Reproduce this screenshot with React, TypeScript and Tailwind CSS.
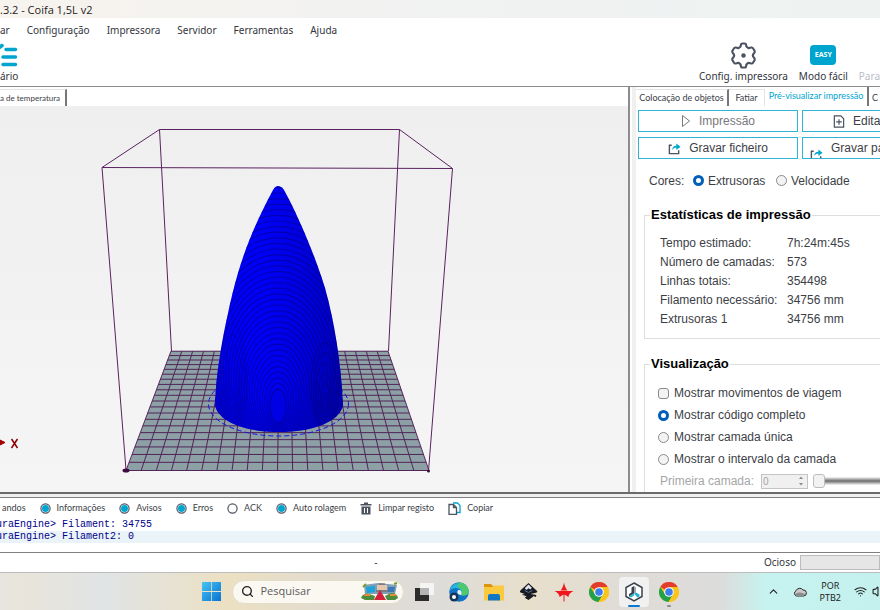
import React from 'react';
import { ChevronUp, Search, Wifi, Volume1 } from 'lucide-react';

const menus = ['ar', 'Configuração', 'Impressora', 'Servidor', 'Ferramentas', 'Ajuda'];

const stats = [
  { label: 'Tempo estimado:', value: '7h:24m:45s' },
  { label: 'Número de camadas:', value: '573' },
  { label: 'Linhas totais:', value: '354498' },
  { label: 'Filamento necessário:', value: '34756 mm' },
  { label: 'Extrusoras 1', value: '34756 mm' },
];

const logFilters = [
  { label: 'andos', on: true, hidden: true },
  { label: 'Informações', on: true },
  { label: 'Avisos', on: true },
  { label: 'Erros', on: true },
  { label: 'ACK', on: false },
  { label: 'Auto rolagem', on: true },
];

const radioClass =
  'm-0 size-[11px] shrink-0 appearance-none rounded-full border border-[#8a8a8a] bg-[#f3f3f3] checked:border-[3px] checked:border-[#005fb8] checked:bg-white';

const taskButton = 'relative flex h-[30px] w-[30px] items-center justify-center rounded-[4px]';

// Floor grid: 20 x 20 cells in one point perspective
const CELLS = 20;
const K = 0.396;
const floorPoint = (u: number, t: number) => {
  const s = 1 / (1 + K * t);
  const front = 126 + u * 303;
  return [281 + (front - 281) * s + 1 * t, 50 + 420.5 * s];
};

function Viewport() {
  const steps = Array.from({ length: CELLS + 1 }, (_, i) => i / CELLS);
  const line = (a: number[], b: number[], key: string) => (
    <line key={key} x1={a[0]} y1={a[1]} x2={b[0]} y2={b[1]} />
  );
  const rings = Array.from({ length: 40 }, (_, i) => i);

  return (
    <svg viewBox="0 106 628 385" className="block h-full w-full" preserveAspectRatio="xMinYMin meet" role="img" aria-label="Coifa 1,5L v2">
      <defs>
        <linearGradient id="hull" x1="0" x2="1" y1="0" y2="0">
          <stop offset="0" stopColor="#0000f4" />
          <stop offset="0.35" stopColor="#0000f8" />
          <stop offset="0.65" stopColor="#0000e0" />
          <stop offset="0.85" stopColor="#0000c8" />
          <stop offset="1" stopColor="#0000b4" />
        </linearGradient>
        <clipPath id="hullClip">
          <path d="M278 186 C280 186 282 187 284 190 C298 215 316 258 325 288 C334 320 341 360 343 405 C340 422 312 432 279 432 C246 432 218 422 215 405 C216 375 222 340 227 318 C236 275 246 240 273 190 C275 187 276 186 278 186 Z" />
        </clipPath>
      </defs>

      <polygon points="171,351 388,351 429,471 126,471" fill="#8ca0a5" />
      <g stroke="#4b1850" strokeWidth="1" opacity="0.9">
        {steps.map((u) => line(floorPoint(u, 0), floorPoint(u, 1), `c${u}`))}
        {steps.map((t) => line(floorPoint(0, t), floorPoint(1, t), `r${t}`))}
      </g>
      <g stroke="#5a2260" strokeWidth="1" fill="none">
        <path d="M102 167.500 L159.500 129.500 H399.500 L452.500 168.500 Z" />
        <path d="M159.500 129.500 L171.500 351 M399.500 129.500 L388.500 351 M102 167.500 L126 470 M452.500 168.500 L428.500 471" />
      </g>
      <ellipse cx="126" cy="470.500" rx="3.500" ry="2" fill="#3d0a42" />
      <circle cx="428.500" cy="471" r="1.500" fill="#3d0a42" />

      <ellipse cx="278.500" cy="404" rx="70" ry="32" fill="none" stroke="#1414e6" strokeDasharray="5 3" />
      <g clipPath="url(#hullClip)">
        <rect x="210" y="180" width="140" height="260" fill="url(#hull)" />
        <g fill="none" stroke="#0000b0" strokeWidth="1" opacity="0.5">
          {rings.slice(0, 7).map((i) => (
            <ellipse key={i} cx="232" cy={400 - i * 3} rx={3 + i * 2} ry={10 + i * 8} />
          ))}
        </g>
        <g fill="none" stroke="#000090" strokeWidth="1.2" opacity="0.6">
          {rings.map((i) => (
            <ellipse key={i} cx="278" cy={406 - i * 2} rx={8 + i * 2.6} ry={17 + i * 3.6} />
          ))}
        </g>
        <g fill="none" stroke="#000078" strokeWidth="1" opacity="0.6">
          {rings.slice(0, 6).map((i) => (
            <ellipse key={i} cx="325" cy={401 - i * 3} rx={2 + i * 2.4} ry={8 + i * 7} />
          ))}
        </g>
        <ellipse cx="278" cy="406" rx="8" ry="17" fill="#0000e4" stroke="#00009c" />
      </g>

      <path d="M0 442.500 H2 M0 440 L5 442.500 L0 445 Z" fill="#a00000" stroke="#a00000" />
      <path d="M11.500 439 L17.500 448 M17.500 439 L11.500 448" stroke="#8b0000" strokeWidth="1.500" />
    </svg>
  );
}

function ShareIcon() {
  return (
    <svg viewBox="0 0 14 14" className="size-[13px] shrink-0" fill="none" aria-hidden="true">
      <path d="M4 3.500 H1.500 V12.500 H11.500 V9" stroke="#4c5260" strokeWidth="1.500" />
      <path d="M4.500 9 C4.500 5.500 6.500 4 9 4 V1.500 L13.500 5 L9 8.500 V6 C7 6 5.500 7 4.500 9 Z" fill="#00a5cf" />
    </svg>
  );
}

function ChromeIcon() {
  return (
    <svg viewBox="0 0 20 20" className="size-5" aria-hidden="true">
      <circle cx="10" cy="10" r="10" fill="#f9c51c" />
      <path d="M10 10 L1.300 5 A10 10 0 0 1 18.700 5 Z" fill="#e33b2e" />
      <path d="M1.300 5 A10 10 0 0 0 9.500 20 L14 12.300 L10 10 L6 12.300 Z" fill="#23a04a" />
      <path d="M10 5 H18.700 A10 10 0 0 1 9.500 20 L14.300 12.500 Z" fill="#f9c51c" />
      <circle cx="10" cy="10" r="4.800" fill="#fff" />
      <circle cx="10" cy="10" r="3.800" fill="#3b7ded" />
    </svg>
  );
}

function Header() {
  return (
    <header className="shrink-0 border-b border-[#8c8c8c] bg-white">
      <div className="h-[18px] bg-linear-to-r from-[#f7f3ee] via-[#f1f2f2] to-[#eef3f2] font-['Open_Sans',sans-serif] text-[11px] leading-[19px] text-[#1c1c1c]">
        .3.2 - Coifa 1,5L v2
      </div>
      <nav className="flex h-6 items-center gap-[17px] text-[10px] text-[#33353d]">
        {menus.map((m) => (
          <button key={m} type="button">{m}</button>
        ))}
      </nav>
      <div className="flex h-11 items-start justify-between text-[10px] leading-[14px] text-[#33353d]">
        <button type="button" className="flex flex-col items-start">
          <svg viewBox="0 0 18 26" className="h-[27px] w-[18px]" fill="none" stroke="#00a5cf" strokeWidth="3.500" strokeLinecap="round" aria-hidden="true">
            <path d="M-2 6 L2 3" />
            <path d="M6 7 H15.500 M3 14.500 H15.500 M3 22 H15.500" />
          </svg>
          ário
        </button>
        <div className="flex gap-[11px]">
          <button type="button" className="flex flex-col items-center">
            <svg viewBox="0 0 26 26" className="size-[27px]" fill="none" stroke="#4c5260" strokeWidth="2" strokeLinejoin="round" aria-hidden="true">
              <path d="M10.500 3 Q10.500 1.500 12 1.500 H14 Q15.500 1.500 15.500 3 Q15.500 5 18 6 Q19.500 5.600 20.500 5.300 Q21.600 5 22.300 6.300 L23.800 8.800 Q24.200 10 23 10.900 Q21 13 23 15.100 Q24.200 16 23.800 17.200 L22.300 19.700 Q21.600 21 20.500 20.700 Q19.500 20.400 18 20 Q15.500 21 15.500 23 Q15.500 24.500 14 24.500 H12 Q10.500 24.500 10.500 23 Q10.500 21 8 20 Q6.500 20.400 5.500 20.700 Q4.400 21 3.700 19.700 L2.200 17.200 Q1.800 16 3 15.100 Q5 13 3 10.900 Q1.800 10 2.200 8.800 L3.700 6.300 Q4.400 5 5.500 5.300 Q6.500 5.600 8 6 Q10.500 5 10.500 3 Z" />
              <circle cx="13" cy="13" r="1.200" fill="#4c5260" />
            </svg>
            Config. impressora
          </button>
          <button type="button" className="flex flex-col items-center">
            <span className="mt-[3px] mb-1 flex h-5 w-[26px] items-center justify-center rounded-[4px] bg-[#00a5cf] text-[7px] font-bold text-white">EASY</span>
            Modo fácil
          </button>
          <button type="button" className="pt-[27px] text-[#b9bcc4]" disabled>Para</button>
        </div>
      </div>
    </header>
  );
}

function SidePanel() {
  return (
    <aside className="flex w-[248px] shrink-0 flex-col overflow-hidden border-l-4 border-[#f0f0f0] bg-white font-['Liberation_Sans',Arial,sans-serif] text-[12px] text-[#3c3e46]">
      <div className="flex h-[19px] shrink-0 items-end font-['Lato',sans-serif] text-[9px] whitespace-nowrap" role="tablist">
        <button type="button" role="tab" className="h-[17px] w-[93px] shrink-0 border-t border-r-2 border-t-[#e4e4e4] border-r-[#777]">Colocação de objetos</button>
        <button type="button" role="tab" className="h-[17px] w-9 shrink-0 border-t border-r border-[#e4e4e4]">Fatiar</button>
        <button type="button" role="tab" aria-selected="true" className="h-[19px] w-[104px] shrink-0 border-r-2 border-[#777] pb-[2px] text-[#00a5cf]">Pré-visualizar impressão</button>
        <button type="button" role="tab" className="h-[17px] shrink-0 pl-[3px]">C</button>
      </div>

      <div className="mt-1 ml-[2px] grid w-[324px] shrink-0 grid-cols-2 gap-x-1 gap-y-[5px]">
        <button type="button" className="flex h-[22px] items-center justify-center gap-2 border border-[#2fb4d8] text-[#77787d]">
          <svg viewBox="0 0 10 14" className="h-[14px] w-[10px]" fill="none" stroke="#77787d" aria-hidden="true">
            <path d="M1.500 1.500 L8.500 7 L1.500 12.500 Z" />
          </svg>
          Impressão
        </button>
        <button type="button" className="flex h-[22px] items-center gap-2 border border-[#2fb4d8] pl-[30px]">
          <svg viewBox="0 0 12 14" className="h-[13px] w-3" fill="none" stroke="#4c5260" strokeWidth="1.300" aria-hidden="true">
            <path d="M1 1 H8 L11 4 V13 H1 Z M6 4.500 V10.500 M3 7.500 H9" />
          </svg>
          Edita
        </button>
        <button type="button" className="flex h-[22px] items-center justify-center gap-2 border border-[#2fb4d8]">
          <ShareIcon />
          Gravar ficheiro
        </button>
        <button type="button" className="flex h-[22px] items-start gap-2 overflow-hidden border border-[#2fb4d8] pl-[7px] whitespace-nowrap">
          <span className="pt-[10px]"><ShareIcon /></span>
          <span className="leading-5">Gravar pa</span>
        </button>
      </div>

      <div className="flex h-[43px] shrink-0 items-center pl-[13px]">
        <span className="w-11">Cores:</span>
        <label className="flex w-[83px] items-center gap-1">
          <input type="radio" name="cores" defaultChecked className={radioClass} />
          Extrusoras
        </label>
        <label className="flex items-center gap-1">
          <input type="radio" name="cores" className={radioClass} />
          Velocidade
        </label>
      </div>

      <fieldset className="mt-[3px] ml-2 h-[134px] w-[300px] shrink-0 border border-[#dedede] pl-[15px]">
        <legend className="-ml-[10px] px-[1px] text-[13px] leading-5 font-bold text-black">Estatísticas de impressão</legend>
        <dl className="grid grid-cols-[127px_1fr] pt-[9px] leading-[19px]">
          {stats.map((s) => (
            <React.Fragment key={s.label}>
              <dt>{s.label}</dt>
              <dd>{s.value}</dd>
            </React.Fragment>
          ))}
        </dl>
      </fieldset>

      <fieldset className="mt-[15px] ml-2 w-[300px] shrink-0 border border-[#dedede] pl-[13px]">
        <legend className="-ml-2 px-[1px] text-[13px] leading-5 font-bold text-black">Visualização</legend>
        <div className="flex flex-col pt-2">
          <label className="flex h-[22px] items-center gap-[5px]">
            <input type="checkbox" className="m-0 size-[11px] appearance-none rounded-[3px] border border-[#8a8a8a] bg-[#f3f3f3]" />
            Mostrar movimentos de viagem
          </label>
          {['Mostrar código completo', 'Mostrar camada única', 'Mostrar o intervalo da camada'].map((l, i) => (
            <label key={l} className="flex h-[22px] items-center gap-[5px]">
              <input type="radio" name="vista" defaultChecked={i === 0} className={radioClass} />
              {l}
            </label>
          ))}
          <div className="flex h-[22px] items-center pl-[2px] text-[#a6a6a6]">
            <label htmlFor="layer" className="w-[101px]">Primeira camada:</label>
            <span className="flex h-[15px] w-[47px] items-center border border-[#c4c4c4] bg-[#f0f0f0]">
              <input id="layer" type="text" defaultValue="0" disabled className="w-9 pl-[1px] text-[10px]" />
              <svg viewBox="0 0 6 12" className="h-3 w-[6px]" fill="#8a8a8a" aria-hidden="true">
                <path d="M1 4 L3 1.500 L5 4 Z M1 8 L3 10.500 L5 8 Z" />
              </svg>
            </span>
            <input
              type="range"
              aria-label="Primeira camada"
              defaultValue={0}
              disabled
              className="ml-[5px] h-[14px] w-[130px] appearance-none bg-linear-to-b from-transparent from-20% via-[#6c6c6c] via-50% to-transparent to-80% [&::-webkit-slider-thumb]:h-[14px] [&::-webkit-slider-thumb]:w-3 [&::-webkit-slider-thumb]:appearance-none [&::-webkit-slider-thumb]:rounded-[3px] [&::-webkit-slider-thumb]:border [&::-webkit-slider-thumb]:border-[#bdbdbd] [&::-webkit-slider-thumb]:bg-[#f2f2f2]"
            />
          </div>
        </div>
      </fieldset>
    </aside>
  );
}

function LogPanel() {
  return (
    <section className="mt-[3px] shrink-0 overflow-hidden border-y border-[#808080] bg-white">
      <div className="flex h-5 items-center gap-[14px] pl-[2px] font-['Lato',sans-serif] text-[9px] text-[#3c3e46]">
        {logFilters.map((f) => (
          <button key={f.label} type="button" className="flex items-center gap-[6px]">
            {!f.hidden && (
              <svg viewBox="0 0 12 12" className="size-[11px]" fill="none" aria-hidden="true">
                <circle cx="6" cy="6" r="5" stroke="#4c5260" strokeWidth="1.300" />
                {f.on && <circle cx="6" cy="6" r="3.800" fill="#00a5cf" />}
              </svg>
            )}
            {f.label}
          </button>
        ))}
        <button type="button" className="flex items-center gap-[6px]">
          <svg viewBox="0 0 12 13" className="h-[13px] w-3" fill="#4c5260" aria-hidden="true">
            <path d="M4 0.500 H8 V2 H11.500 V3.500 H0.500 V2 H4 Z" />
            <path d="M1.500 4.500 H10.500 V12.500 H1.500 Z M4 6 V11 H5 V6 Z M7 6 V11 H8 V6 Z" fillRule="evenodd" />
          </svg>
          Limpar registo
        </button>
        <button type="button" className="flex items-center gap-[6px]">
          <svg viewBox="0 0 13 13" className="size-[13px]" fill="none" strokeWidth="1.300" aria-hidden="true">
            <path d="M5 1 H9.500 L12 3.500 V10.500 H9" stroke="#00a5cf" />
            <path d="M1 2.500 H5.500 L8.500 5.500 V12.300 H1 Z M5.500 2.500 V5.500 H8.500" stroke="#4c5260" />
          </svg>
          Copiar
        </button>
      </div>
      <div className="-ml-1 h-[34px] font-['Liberation_Mono',monospace] text-[10px] leading-3 text-[#00008b]">
        <p className="pt-[1px]">uraEngine&gt; Filament: 34755</p>
        <p className="bg-[#eaf4f8]">uraEngine&gt; Filament2: 0</p>
      </div>
    </section>
  );
}

function Taskbar() {
  return (
    <footer className="flex h-[38px] shrink-0 items-center border-t border-[#bcbcbc] bg-[linear-gradient(90deg,#e6e5df_0%,#e8e4da_3%,#e0e4e5_12%,#ece0c2_26%,#e2dcd0_38%,#dedcda_50%,#e8dfcb_60%,#e0dcd6_70%,#dcdcdc_82%,#c6f3ef_87%,#c4f1ee_100%)] text-[#222]">
      <div className="flex-1" />
      <div className="flex shrink-0 items-center gap-[5px]">
        <button type="button" className={taskButton} aria-label="Iniciar">
          <svg viewBox="0 0 20 20" className="size-[19px]" aria-hidden="true">
            <defs>
              <linearGradient id="win" x1="0" y1="0" x2="1" y2="1">
                <stop offset="0" stopColor="#45c4f5" />
                <stop offset="1" stopColor="#0a72d0" />
              </linearGradient>
            </defs>
            <path d="M0 0 H9.600 V9.600 H0 Z M10.400 0 H20 V9.600 H10.400 Z M0 10.400 H9.600 V20 H0 Z M10.400 10.400 H20 V20 H10.400 Z" fill="url(#win)" />
          </svg>
        </button>

        <label className="flex h-6 w-[172px] items-center rounded-full border border-[#e2dccb] bg-[#fbf8f1] pl-2">
          <Search size={13} strokeWidth={2.5} aria-hidden="true" />
          <input type="search" placeholder="Pesquisar" aria-label="Pesquisar" className="ml-[7px] w-24 bg-transparent font-['Open_Sans',sans-serif] text-[11px] placeholder:text-[#5c5c5c]" />
          <svg viewBox="0 0 38 19" className="ml-1 h-[19px] w-[38px] shrink-0" aria-hidden="true">
            <path d="M3 3 L17 1 L36 3 L34 12 H4 Z" fill="#7d9fb8" />
            <path d="M5 5 L14 4 V10 L6 11 Z" fill="#1ca4d8" />
            <path d="M16 3 H26 V8 H16 Z" fill="#e6c7ae" />
            <path d="M27 5 L34 5 L33 10 H27 Z" fill="#3a78b8" />
            <path d="M18 2 H24 M15 9 H27" stroke="#7b5a50" />
            <path d="M0 16 Q2 11 8 12 L14 14 L13 18 H4 Z M37 16 Q36 11 30 11 L24 14 L26 18 H34 Z" fill="#4d8c3c" />
            <path d="M3 13 H9 M29 13 H35" stroke="#e58b3b" strokeWidth="2" />
            <path d="M19 8 L25 18 H13 Z" fill="#d5203a" />
            <path d="M2 5 L5 2 M33 2 L36 1" stroke="#7a9a32" strokeWidth="2" />
          </svg>
        </label>

        <button type="button" className={taskButton} aria-label="Vista de tarefas">
          <svg viewBox="0 0 20 20" className="size-5" aria-hidden="true">
            <path d="M1 6 H15 V19 H1 Z" fill="#2c2c2c" />
            <path d="M6 1 H20 V13 H6 Z" fill="#f7f7f7" opacity="0.9" />
            <path d="M6 6 H15 V13 H6 Z" fill="#b4b4b4" />
          </svg>
        </button>
        <button type="button" className={taskButton} aria-label="Edge">
          <svg viewBox="0 0 20 20" className="size-5" aria-hidden="true">
            <circle cx="10" cy="10" r="9.800" fill="#1273c4" />
            <path d="M0.500 9 A9.800 9.800 0 0 1 19.800 9 C20 13 15 14.500 12 13 C14 10 11 6 7 6 C4 6 2 7 0.500 9 Z" fill="#2bb6d8" />
            <path d="M10 0.200 A9.800 9.800 0 0 1 19.800 10 C19 14 14.500 14 12 13 C14.500 9 12 6 9 5 Z" fill="#4fc96a" />
            <path d="M12 13 C8 13 7.500 9 9.500 8 C12 8 13.500 10 12 13 Z" fill="#e7f2f5" />
            <circle cx="5" cy="15" r="4.500" fill="#173556" />
            <circle cx="5" cy="15" r="2" fill="#fff" />
          </svg>
        </button>
        <button type="button" className={taskButton} aria-label="Explorador de ficheiros">
          <svg viewBox="0 0 20 20" className="size-5" aria-hidden="true">
            <path d="M0 2 H7 L9 4 V8 H0 Z" fill="#d99511" />
            <path d="M0 5 H8 L10 3.500 H20 V18.500 H0 Z" fill="#fbc93d" />
            <path d="M4 18.500 V14 Q4 12 6 12 H14 Q16 12 16 14 V18.500 Z" fill="#1176c8" />
          </svg>
        </button>
        <button type="button" className={taskButton} aria-label="Inkscape">
          <svg viewBox="0 0 20 20" className="size-[19px]" aria-hidden="true">
            <path d="M10 1 L19 9.500 Q20 11 17 11.500 L12 12.500 L17 13.500 L14 16 L10 19 L6 16.500 L8 15 L3 13.500 L6 12.500 L1.500 11 Q0 10 2 8.500 Z" fill="#171a20" />
            <path d="M10 2.500 L13.500 6 L12 8 L10 6.500 L8 8.500 L6 6.500 Z" fill="#dfe6ee" />
            <path d="M6 9 L10 11 L14 9" stroke="#54779e" fill="none" />
            <circle cx="17" cy="14.500" r="1.200" fill="#171a20" />
          </svg>
        </button>
        <button type="button" className={taskButton} aria-label="Estrela">
          <svg viewBox="0 0 20 20" className="size-5" fill="#f0141c" aria-hidden="true">
            <path d="M10 0.500 Q11 6 13.500 8.500 H6.500 Q9 6 10 0.500 Z M0.500 9 H19.500 Q14.500 11.500 14.500 15 L10.500 12.500 V19.500 H9.500 V12.500 L5.500 15 Q5.500 11.500 0.500 9 Z" />
          </svg>
        </button>
        <button type="button" className={taskButton} aria-label="Chrome">
          <ChromeIcon />
        </button>
        <button type="button" className={`${taskButton} bg-[#f1f1f1]`} aria-label="Fatiador">
          <svg viewBox="0 0 20 20" className="size-5" fill="none" aria-hidden="true">
            <path d="M10 1 L18 5.500 V14.500 L10 19 L2 14.500 V5.500 Z" stroke="#3b424c" strokeWidth="1.500" fill="#fff" />
            <path d="M7.500 5.500 L10 4 V11.500 L5 14.500 V12 L7.500 10.500 Z" fill="#3b424c" />
            <path d="M10 4 L12 5.500 V10.500 L10 11.500 Z" fill="#9aa6b0" />
            <path d="M10 11.500 L12 10.500 L15.500 12.500 V14.500 L13.500 15.500 Z" fill="#1fb1d6" />
            <path d="M5 14.500 L10 11.500 V13.500 L7 15.500 Z" fill="#1fb1d6" />
          </svg>
          <span className="absolute bottom-0 h-[2px] w-3 rounded-full bg-[#0a78d4]" />
        </button>
        <button type="button" className={taskButton} aria-label="Chrome">
          <ChromeIcon />
          <span className="absolute bottom-0 h-[2px] w-1 rounded-full bg-[#8a8a8a]" />
        </button>
      </div>

      <div className="flex flex-1 items-center justify-end gap-[13px]">
        <ChevronUp size={13} aria-hidden="true" />
        <svg viewBox="0 0 14 10" className="h-[10px] w-[14px]" aria-hidden="true">
          <path d="M3.500 9 A2.800 2.800 0 0 1 3 3.800 A4 4 0 0 1 10 3 A3 3 0 0 1 10.800 9 Z" fill="#c9c9c9" stroke="#2b2b2b" />
          <path d="M2 7 Q6 4 12 7 L10.800 9 H3.500 Z" fill="#8c8c8c" />
        </svg>
        <span className="text-center text-[9px] leading-3">
          POR
          <br />
          PTB2
        </span>
        <span className="flex items-center gap-[5px]">
          <Wifi size={13} aria-hidden="true" />
          <Volume1 size={13} className="-mr-[5px]" aria-hidden="true" />
        </span>
      </div>
    </footer>
  );
}

export default function App() {
  return (
    <div className="flex h-screen flex-col overflow-hidden bg-[#f0f0f0] font-['Noto_Sans','Open_Sans',sans-serif]">
      <Header />
      <main className="flex min-h-0 flex-1 border-b-2 border-[#6b6b6b]">
        <section className="flex min-w-0 flex-1 flex-col border-r-2 border-[#8c8c8c]">
          <div className="flex h-[19px] shrink-0 items-end bg-white font-['Lato',sans-serif] text-[8px] text-[#3c3e46]">
            <button type="button" className="h-[17px] w-[67px] border-t border-r-2 border-t-[#e4e4e4] border-r-[#777] text-left whitespace-nowrap">a de temperatura</button>
          </div>
          <div className="min-h-0 flex-1 bg-linear-to-b from-[#efefef] to-[#f5f5f5]">
            <Viewport />
          </div>
        </section>
        <div className="w-[2px] shrink-0 bg-white" />
        <SidePanel />
      </main>
      <LogPanel />
      <div className="flex h-[19px] shrink-0 items-center bg-white text-[10px] text-[#33353d]">
        <span className="flex-1 pr-3 text-center">-</span>
        <span className="pr-1">Ocioso</span>
        <span className="h-[15px] w-20 border border-[#bcbcbc] bg-[#e6e6e6]" />
      </div>
      <Taskbar />
    </div>
  );
}
